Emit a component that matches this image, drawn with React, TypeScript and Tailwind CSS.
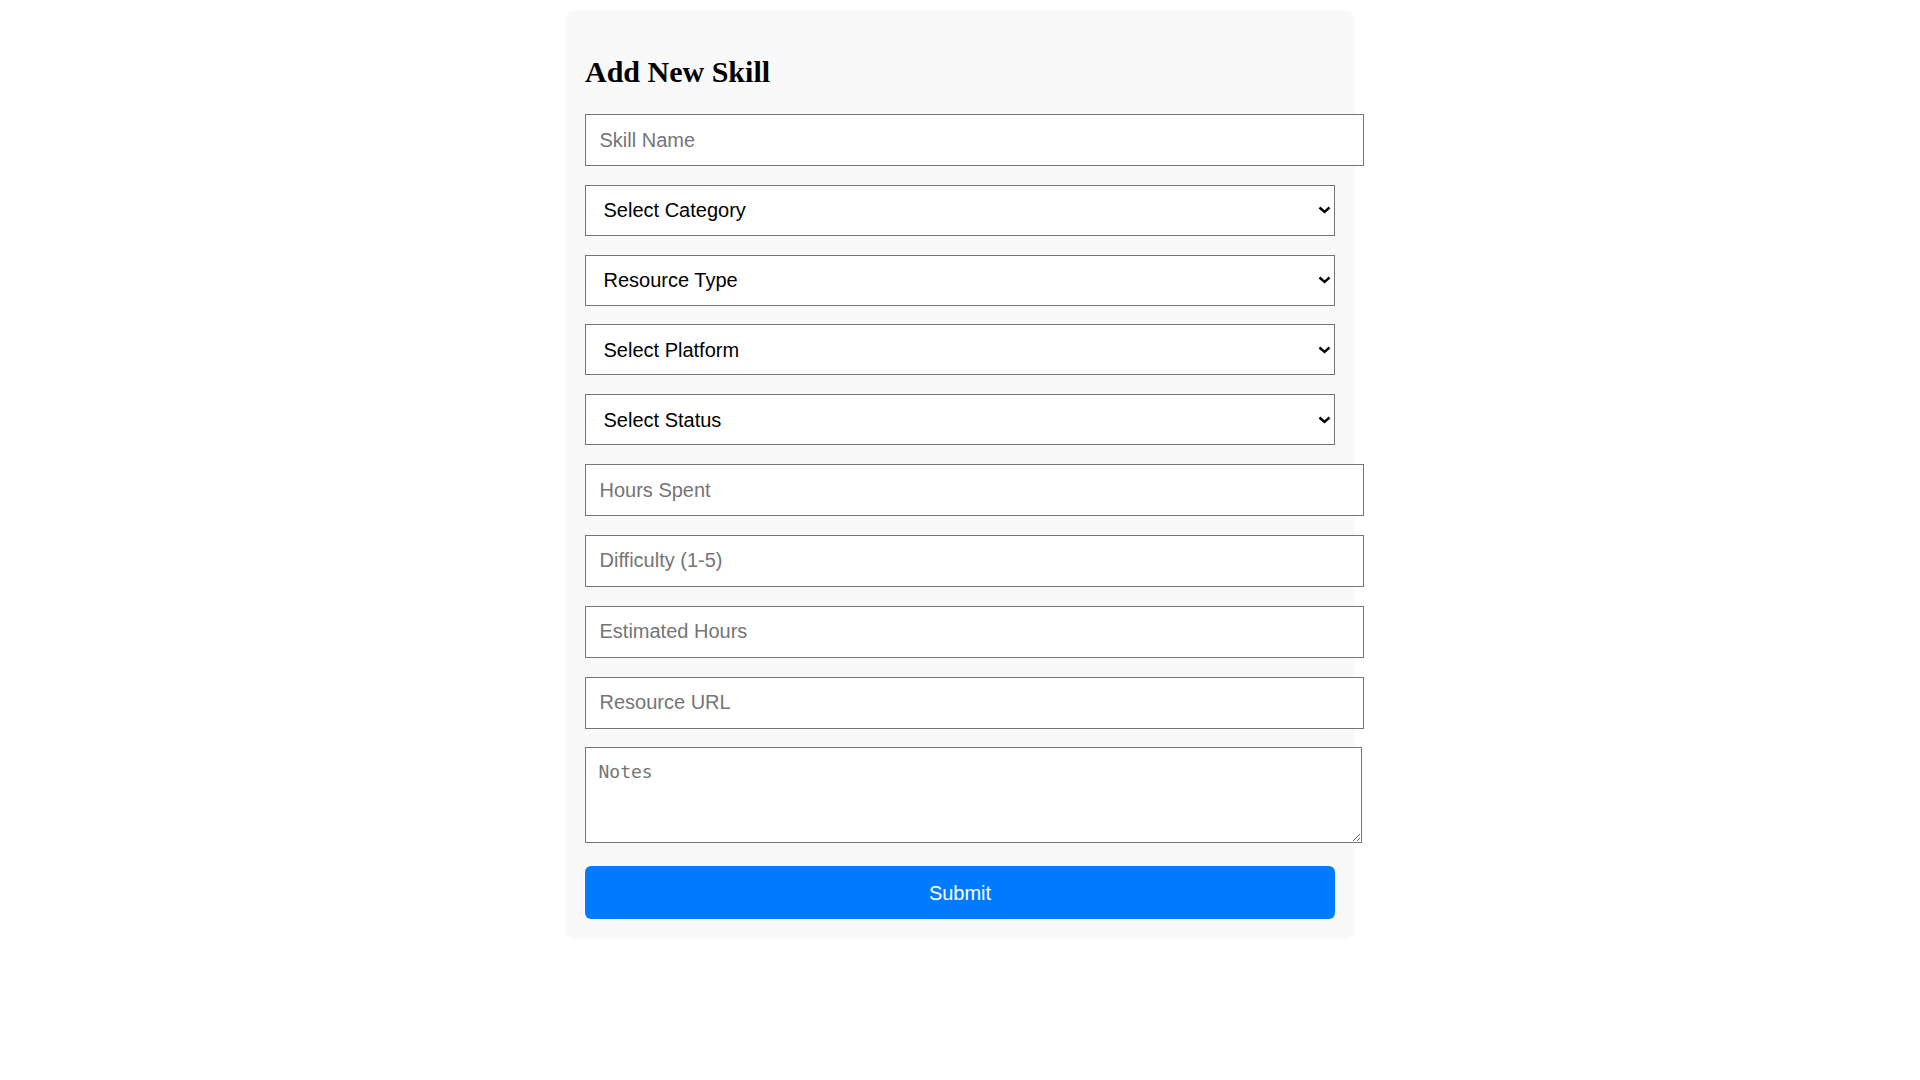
import React from "react";

const inputCls =
  "block w-[779px] h-[52px] mb-[18.82px] pl-[13.5px] pr-[12.5px] bg-white border border-[#767676] text-[20px] text-black placeholder:text-[#757575] outline-none";

function Chevron() {
  return (
    <svg
      className="pointer-events-none absolute right-[4px] top-1/2 -translate-y-1/2"
      width="13"
      height="8"
      viewBox="0 0 13 8"
      fill="none"
    >
      <path d="M1.5 1.5 L6.5 6 L11.5 1.5" stroke="#000" strokeWidth="2.4" strokeLinecap="butt" />
    </svg>
  );
}

function Select({ label }: { label: string }) {
  return (
    <div className="relative w-[750px] h-[51px] mb-[18.82px]">
      <select
        defaultValue=""
        className="block w-full h-full appearance-none pl-[17.5px] pr-[30px] bg-white border border-[#767676] text-[20px] text-black outline-none"
      >
        <option value="">{label}</option>
      </select>
      <Chevron />
    </div>
  );
}

export default function App() {
  return (
    <div className="min-h-[1080px] bg-white font-['Liberation_Sans',Arial,sans-serif]">
      <div className="mx-auto mt-[10px] w-[790px] rounded-[10px] bg-[#f9f9f9] p-[20px]">
        <h2 className="mt-[25px] mb-[25px] font-['Liberation_Serif','Times_New_Roman',serif] text-[30px] font-bold leading-[34px] text-black">
          Add New Skill
        </h2>
        <form onSubmit={(e) => e.preventDefault()}>
          <input className={inputCls} placeholder="Skill Name" />
          <Select label="Select Category" />
          <Select label="Resource Type" />
          <Select label="Select Platform" />
          <Select label="Select Status" />
          <input className={inputCls} placeholder="Hours Spent" />
          <input className={inputCls} placeholder="Difficulty (1-5)" />
          <input className={inputCls} placeholder="Estimated Hours" />
          <input className={inputCls} placeholder="Resource URL" />
          <textarea
            className="block w-[777px] h-[96px] p-[12.5px] bg-white border border-[#767676] font-['DejaVu_Sans_Mono',monospace] text-[18px] leading-[21px] text-black placeholder:text-[#757575] outline-none"
            placeholder="Notes"
          />
          <button
            type="submit"
            className="mt-[23px] block w-[750px] h-[52.5px] rounded-[6px] bg-[#007bff] text-[20px] text-white"
          >
            Submit
          </button>
        </form>
      </div>
    </div>
  );
}
